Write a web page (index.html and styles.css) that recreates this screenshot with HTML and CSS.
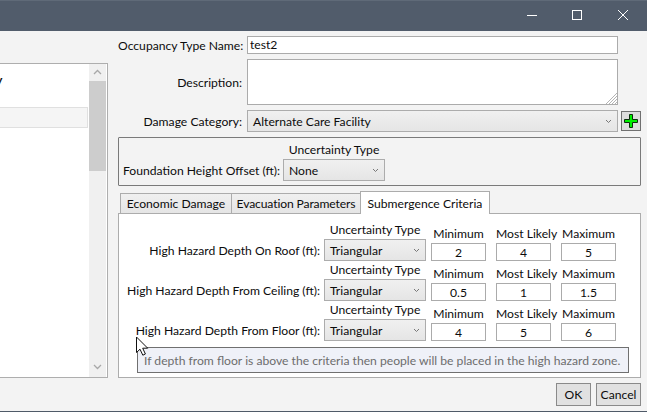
FILE: index.html
```html
<!DOCTYPE html>
<html>
<head>
	<meta charset="utf-8">
	<title>Occupancy Type</title>
	<link rel="stylesheet" href="styles.css">
</head>
<body>
	<div class="window">
		<div class="titlebar">
			<svg class="caption-btn" width="46" height="31" viewBox="0 0 46 31"><path d="M19 15.500h10" stroke="#fff" fill="none"/></svg>
			<svg class="caption-btn" width="46" height="31" viewBox="0 0 46 31"><rect x="18.500" y="10.500" width="9" height="9" stroke="#fff" fill="none"/></svg>
			<svg class="caption-btn" width="46" height="31" viewBox="0 0 46 31"><path d="M18 10l10 10M28 10l-10 10" stroke="#fff" fill="none"/></svg>
		</div>

		<div class="content">
			<div class="list-panel">
				<div class="list-body">
					<div class="list-head">y</div>
					<div class="list-row"></div>
				</div>
				<div class="scrollbar">
					<svg class="scroll-arrow" width="17" height="17" viewBox="0 0 17 17"><path d="M5 10l3.500-3.500 3.500 3.500" stroke="#a8a8a8" stroke-width="1.300" fill="none"/></svg>
					<div class="scroll-thumb"></div>
					<svg class="scroll-arrow scroll-arrow-down" width="17" height="17" viewBox="0 0 17 17"><path d="M5 7l3.500 3.500 3.500-3.500" stroke="#a8a8a8" stroke-width="1.300" fill="none"/></svg>
				</div>
			</div>

			<div class="editor">
				<div class="field field-name">
					<label class="field-label">Occupancy Type Name:</label>
					<div class="text-box">test2</div>
				</div>
				<div class="field field-desc">
					<label class="field-label">Description:</label>
					<div class="text-box text-area">
						<svg class="grip" width="12" height="12" viewBox="0 0 12 12"><path d="M1 12L12 1M4 12l8-8M7 12l5-5M10 12l2-2" stroke="#b4b4b4" fill="none"/></svg>
					</div>
				</div>
				<div class="field field-cat">
					<label class="field-label">Damage Category:</label>
					<div class="combo combo-wide">
						<span>Alternate Care Facility</span>
						<svg class="chevron" width="7" height="5" viewBox="0 0 7 5"><path d="M1 1l2.500 2.500L6 1" stroke="#777" stroke-width="1" fill="none"/></svg>
					</div>
					<div class="add-btn">
						<svg width="16" height="16" viewBox="0 0 16 16"><path d="M6.500 1.500h3v5h5v3h-5v5h-3v-5h-5v-3h5z" fill="#00f000" stroke="#0b2e0b" stroke-width="1"/></svg>
					</div>
				</div>

				<div class="group-box">
					<div class="found-label">Foundation Height Offset (ft):</div>
					<div class="found-col">
						<div class="found-cap">Uncertainty Type</div>
						<div class="combo combo-none">
							<span>None</span>
							<svg class="chevron" width="7" height="5" viewBox="0 0 7 5"><path d="M1 1l2.500 2.500L6 1" stroke="#777" stroke-width="1" fill="none"/></svg>
						</div>
					</div>
				</div>

				<div class="tabs">
					<div class="tab tab-economic">Economic Damage</div>
					<div class="tab tab-evac">Evacuation Parameters</div>
					<div class="tab tab-active">Submergence Criteria</div>
				</div>
				<div class="tab-panel">
					<div class="crit-row">
						<div class="crit-label">High Hazard Depth On Roof (ft):</div>
						<div class="unc-col">
							<div class="cap">Uncertainty Type</div>
							<div class="combo combo-tri"><span>Triangular</span><svg class="chevron" width="7" height="5" viewBox="0 0 7 5"><path d="M1 1l2.500 2.500L6 1" stroke="#777" stroke-width="1" fill="none"/></svg></div>
						</div>
						<div class="val-col"><div class="cap">Minimum</div><div class="val">2</div></div>
						<div class="val-col"><div class="cap">Most Likely</div><div class="val">4</div></div>
						<div class="val-col"><div class="cap">Maximum</div><div class="val">5</div></div>
					</div>
					<div class="crit-row">
						<div class="crit-label">High Hazard Depth From Ceiling (ft):</div>
						<div class="unc-col">
							<div class="cap">Uncertainty Type</div>
							<div class="combo combo-tri"><span>Triangular</span><svg class="chevron" width="7" height="5" viewBox="0 0 7 5"><path d="M1 1l2.500 2.500L6 1" stroke="#777" stroke-width="1" fill="none"/></svg></div>
						</div>
						<div class="val-col"><div class="cap">Minimum</div><div class="val">0.5</div></div>
						<div class="val-col"><div class="cap">Most Likely</div><div class="val">1</div></div>
						<div class="val-col"><div class="cap">Maximum</div><div class="val">1.5</div></div>
					</div>
					<div class="crit-row">
						<div class="crit-label">High Hazard Depth From Floor (ft):</div>
						<div class="unc-col">
							<div class="cap">Uncertainty Type</div>
							<div class="combo combo-tri"><span>Triangular</span><svg class="chevron" width="7" height="5" viewBox="0 0 7 5"><path d="M1 1l2.500 2.500L6 1" stroke="#777" stroke-width="1" fill="none"/></svg></div>
						</div>
						<div class="val-col"><div class="cap">Minimum</div><div class="val">4</div></div>
						<div class="val-col"><div class="cap">Most Likely</div><div class="val">5</div></div>
						<div class="val-col"><div class="cap">Maximum</div><div class="val">6</div></div>
					</div>
					<div class="tooltip">If depth from floor is above the criteria then people will be placed in the high hazard zone.</div>
				</div>
				<div class="actions">
					<div class="btn btn-ok">OK</div>
					<div class="btn btn-cancel">Cancel</div>
				</div>
			</div>
		</div>

		<svg class="cursor" width="15" height="21" viewBox="0 0 15 21"><path d="M1.500 1v15.500l3.500-3.300 2.800 6 2.600-1.200-2.700-5.800h5z" fill="#fff" stroke="#111" stroke-width="1"/></svg>
	</div>
</body>
</html>
```

FILE: styles.css
```css
html, body {
	margin: 0;
	padding: 0;
}

body {
	font-family: Lato, "Open Sans", sans-serif;
	font-size: 12.15px;
	color: #0c0c0c;
}

.window {
	position: relative;
	width: 647px;
	height: 412px;
	overflow: hidden;
	background: #f3f3f3;
	border-bottom: 1px solid #4f5a68;
	box-sizing: border-box;
}

.titlebar {
	height: 31px;
	background: #515c6b;
	border-top: 1px solid #5f6a78;
	box-sizing: border-box;
	display: flex;
	justify-content: flex-end;
	padding-right: 1px;
}

.caption-btn {
	display: block;
	margin-top: -1px;
}

.content {
	display: flex;
}

/* left list, cut off by the window edge */
.list-panel {
	width: 108px;
	height: 315px;
	margin-top: 32px;
	background: #fff;
	border: 1px solid #aeaeae;
	border-left: none;
	box-sizing: border-box;
	display: flex;
}

.list-body {
	width: 88px;
	flex: none;
	padding-top: 7px;
}

.list-head {
	height: 17px;
	line-height: 17px;
	margin-left: -4px;
	font-weight: bold;
}

.list-row {
	height: 21px;
	margin-top: 19px;
	background: #f5f5f5;
	border: 1px solid #e0e0e0;
	border-left: none;
	box-sizing: border-box;
}

.scrollbar {
	width: 17px;
	margin-left: 1px;
	background: #f0f0f0;
	display: flex;
	flex-direction: column;
}

.scroll-arrow {
	display: block;
	flex: none;
}

.scroll-arrow-down {
	margin-top: auto;
	margin-bottom: 2px;
}

.scroll-thumb {
	height: 90px;
	background: #cdcdcd;
}

.editor {
	width: 523px;
	margin-left: 10px;
}

.field {
	display: flex;
	align-items: flex-start;
}

.field-name {
	height: 18px;
	padding-top: 5px;
}

.field-desc,
.field-cat {
	margin-top: 5px;
}

.field-desc {
	height: 46px;
}

.field-cat {
	height: 22px;
}

.field-label {
	width: 124px;
	text-align: right;
	line-height: 19px;
	margin-right: 5px;
	flex: none;
	white-space: nowrap;
}

.field-desc .field-label {
	line-height: 48px;
}

.field-cat .field-label {
	line-height: 24px;
}

.text-box {
	width: 371px;
	height: 18px;
	line-height: 16px;
	padding-left: 2px;
	background: #fff;
	border: 1px solid #ababab;
	box-sizing: border-box;
}

.text-area {
	height: 46px;
	position: relative;
}

.grip {
	position: absolute;
	right: 0;
	bottom: 0;
}

.combo {
	height: 22px;
	line-height: 20px;
	padding: 0 5px;
	background: linear-gradient(#f0f0f0, #e5e5e5);
	border: 1px solid #acacac;
	box-sizing: border-box;
	display: flex;
	align-items: center;
	justify-content: space-between;
}

.combo span {
	padding-top: 2px;
}

.chevron {
	display: block;
}

.combo-wide {
	width: 371px;
}

.add-btn {
	width: 20px;
	height: 20px;
	margin: 1px 0 0 3px;
	background: #ddd;
	border: 1px solid #707070;
	box-sizing: border-box;
	display: flex;
	align-items: center;
	justify-content: center;
}

.group-box {
	height: 49px;
	margin-top: 5px;
	padding: 0 4px 4px;
	border: 1px solid #7a7a7a;
	border-radius: 1px;
	box-sizing: border-box;
	display: flex;
	align-items: flex-end;
}

.found-label {
	line-height: 20px;
	width: 160px;
	white-space: nowrap;
}

.found-col {
	width: 102px;
}

.found-cap {
	text-align: center;
	line-height: 17px;
	height: 18px;
	white-space: nowrap;
}

.combo-none {
	width: 102px;
}

.tabs {
	display: flex;
	height: 22px;
	margin-top: 5px;
	padding-left: 2px;
	align-items: flex-end;
	box-sizing: border-box;
}

.tab {
	height: 20px;
	line-height: 20px;
	text-align: center;
	background: linear-gradient(#f0f0f0, #e5e5e5);
	border: 1px solid #acacac;
	border-bottom: none;
	border-right: none;
	box-sizing: border-box;
	white-space: nowrap;
}

.tab-economic {
	width: 111px;
}

.tab-evac {
	width: 129px;
	letter-spacing: -0.13px;
}

.tab-active {
	width: 130px;
	height: 23px;
	line-height: 23px;
	background: #fff;
	border-right: 1px solid #acacac;
	position: relative;
	z-index: 1;
	margin-bottom: -1px;
}

.tab-panel {
	position: relative;
	height: 165px;
	background: #fff;
	border: 1px solid #acacac;
	box-sizing: border-box;
	padding-top: 7px;
}

.crit-row {
	display: flex;
	height: 40px;
	align-items: flex-end;
}

.crit-label {
	width: 201px;
	text-align: right;
	line-height: 20px;
	flex: none;
	white-space: nowrap;
}

.unc-col {
	width: 102px;
	margin-left: 4px;
	flex: none;
}

.cap {
	text-align: center;
	line-height: 16px;
	height: 17px;
	white-space: nowrap;
}

.combo-tri {
	width: 102px;
}

.val-col {
	width: 55px;
	flex: none;
}

.unc-col + .val-col {
	margin-left: 5px;
}

.val-col + .val-col {
	margin-left: 10px;
}

.val {
	height: 18px;
	line-height: 18px;
	text-align: center;
	background: #fff;
	border: 1px solid #ababab;
	box-sizing: border-box;
}

.val-col .cap {
	height: 18px;
	line-height: 18px;
}

.tooltip {
	position: absolute;
	left: 18px;
	top: 133px;
	width: 492px;
	height: 26px;
	line-height: 26px;
	padding-left: 6px;
	color: #6d6d6d;
	background: #eff1f8;
	border: 1px solid #707070;
	box-sizing: border-box;
	white-space: nowrap;
}

.actions {
	display: flex;
	justify-content: flex-end;
	gap: 5px;
	margin-top: 5px;
}

.btn {
	height: 23px;
	line-height: 21px;
	text-align: center;
	background: #e1e1e1;
	border: 1px solid #8a8a8a;
	box-sizing: border-box;
}

.btn-ok {
	width: 35px;
}

.btn-cancel {
	width: 45px;
}

.cursor {
	position: absolute;
	left: 135px;
	top: 336px;
}
```
